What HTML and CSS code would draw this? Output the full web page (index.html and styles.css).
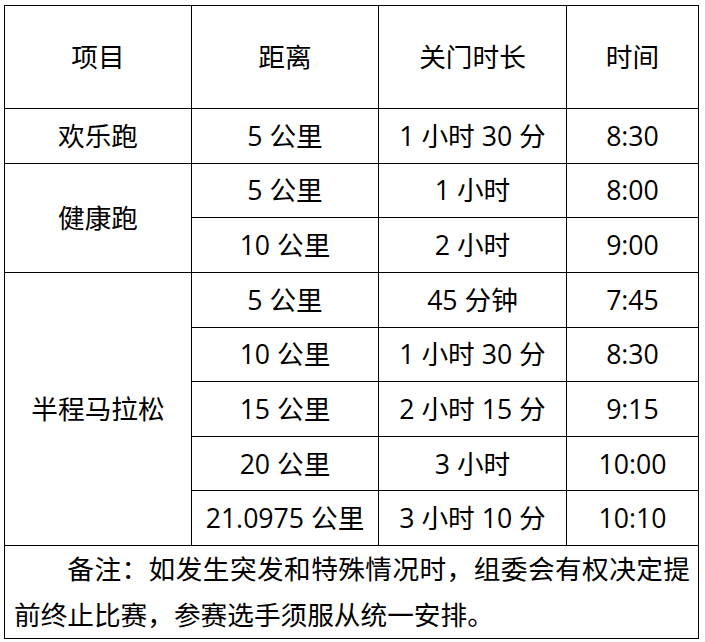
FILE: index.html
```html
<!DOCTYPE html>
<html lang="zh-CN">
<head>
<meta charset="utf-8">
<title>赛事关门时间</title>
<link rel="stylesheet" href="styles.css">
</head>
<body>
<table class="schedule">
  <colgroup>
    <col class="c1"><col class="c2"><col class="c3"><col class="c4">
  </colgroup>
  <thead>
    <tr class="head">
      <th>项目</th><th>距离</th><th>关门时长</th><th>时间</th>
    </tr>
  </thead>
  <tbody>
    <tr class="row"><td>欢乐跑</td><td>5 公里</td><td>1 小时 30 分</td><td>8:30</td></tr>
    <tr class="row"><td rowspan="2">健康跑</td><td>5 公里</td><td>1 小时</td><td>8:00</td></tr>
    <tr class="row"><td>10 公里</td><td>2 小时</td><td>9:00</td></tr>
    <tr class="row"><td rowspan="5">半程马拉松</td><td>5 公里</td><td>45 分钟</td><td>7:45</td></tr>
    <tr class="row"><td>10 公里</td><td>1 小时 30 分</td><td>8:30</td></tr>
    <tr class="row"><td>15 公里</td><td>2 小时 15 分</td><td>9:15</td></tr>
    <tr class="row"><td>20 公里</td><td>3 小时</td><td>10:00</td></tr>
    <tr class="row"><td>21.0975 公里</td><td>3 小时 10 分</td><td>10:10</td></tr>
    <tr class="note-row"><td colspan="4" class="note">备注：如发生突发和特殊情况时，组委会有权决定提前终止比赛，参赛选手须服从统一安排。</td></tr>
  </tbody>
</table>
</body>
</html>
```
FILE: styles.css
```css
html, body {
  margin: 0;
  padding: 0;
  background: #ffffff;
}
body {
  padding: 5px 0 0 4px;
  font-family: "Segoe UI", "Open Sans", "Noto Sans CJK SC", sans-serif;
  color: #000;
}
.schedule {
  border-collapse: collapse;
  table-layout: fixed;
  width: 694px;
  font-size: 26.67px;
  line-height: 1.2;
}
.c1 { width: 187px; }
.c2 { width: 187px; }
.c3 { width: 188px; }
.c4 { width: 132px; }
.schedule th,
.schedule td {
  border: 1px solid #000;
  padding: 0;
  text-align: center;
  vertical-align: middle;
  font-weight: normal;
  white-space: nowrap;
}
.head { height: 103px; }
.row { height: 54.625px; }
.note-row { height: 92px; }
.schedule td.note {
  text-align: justify;
  text-justify: inter-character;
  white-space: normal;
  padding: 0 8px 0 9px;
  text-indent: 2em;
  line-height: 46px;
}
```
